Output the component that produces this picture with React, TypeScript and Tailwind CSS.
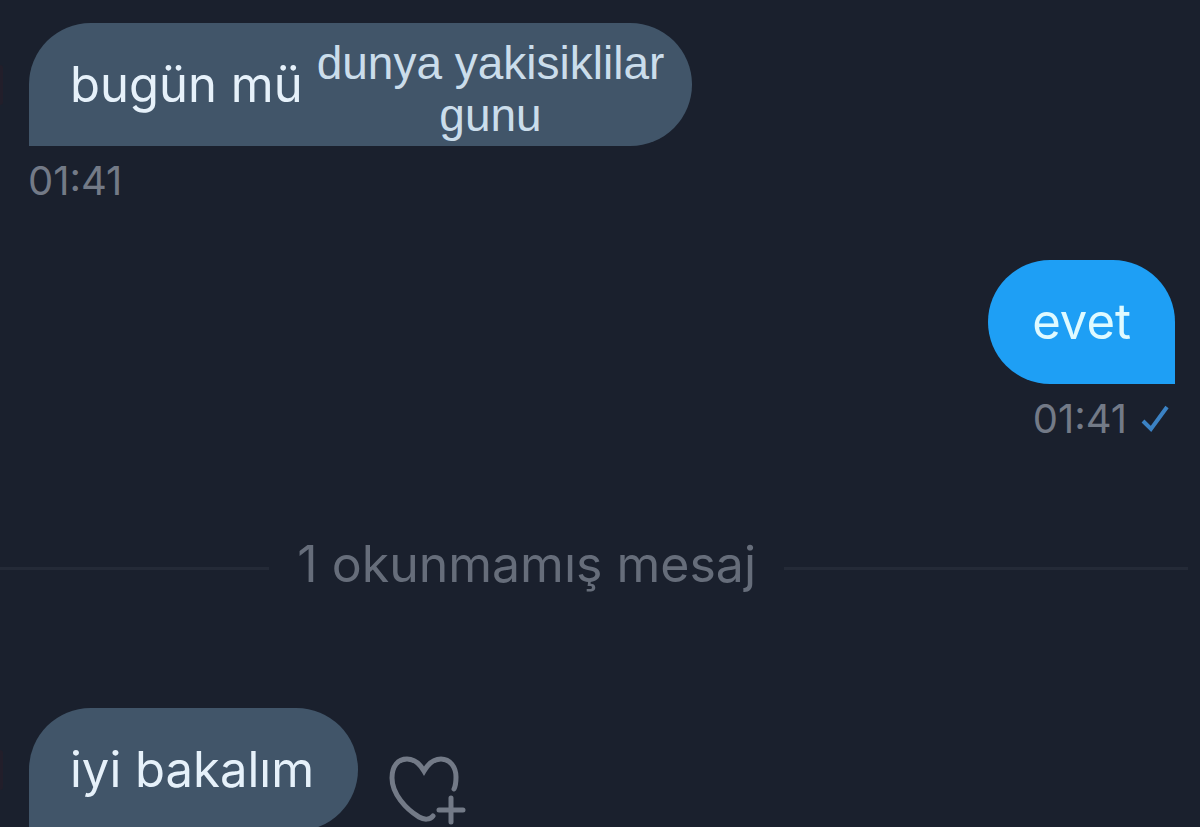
import type { ReactNode } from "react";

const HeartPlus = () => (
  <svg viewBox="0 0 80 76" className="w-20 h-[76px]" fill="none" stroke="currentColor" strokeWidth="5" strokeLinecap="round">
    <path d="M45 61C42 65 36 65 31 62C18 54 4 39 4 23C4 11 10 4 19 4C27 4 32 9 36 16C40 9 45 4 53 4C62 4 68 12 68 22C68 27 68 30 66 34" />
    <path d="M51 55H75M63 43V67" />
  </svg>
);

const Check = () => (
  <svg viewBox="0 0 28 28" className="w-7 h-7 text-[#3b82c4]" fill="none" stroke="currentColor" strokeWidth="4">
    <path d="M2 16L10 24L26 2" />
  </svg>
);

const IncomingMessage = ({ children, action }: { children: ReactNode; action?: ReactNode }) => (
  <div className="flex items-center">
    {/* Edge of the sender's avatar */}
    <div className="w-[3px] h-10 mr-[26px] rounded-r-full bg-[#221e2a]"></div>
    <div className="flex items-center h-[123px] pl-[41px] pr-7 rounded-[62px] rounded-bl-none bg-[#415569] text-[#e6f1fa]">
      {children}
    </div>
    {action}
  </div>
);

const App = () => {
  return (
    <main
      lang="tr"
      className="h-screen overflow-hidden bg-[#1a202d] pt-[23px] font-['Inter','Liberation_Sans',sans-serif] text-[49px] text-[#737a87]"
    >
      <IncomingMessage>
        <p>bugün mü</p>
        <p className="mt-2 ml-3.5 text-center font-['Liberation_Sans',Arial,sans-serif] text-[46px] leading-[52px] text-[#cbddeb]">
          dunya yakisiklilar
          <br />
          gunu
        </p>
      </IncomingMessage>
      <time className="block mt-3 ml-7 text-[40px] leading-[46px]">01:41</time>

      <div className="flex flex-col items-end mt-14 pr-[25px]">
        <div className="flex items-center h-[124px] px-11 rounded-[62px] rounded-br-none bg-[#1e9ff5] text-[#dffaff]">
          <p>evet</p>
        </div>
        <div className="flex items-center gap-3.5 mt-3 pr-1.5">
          <time className="text-[40px] leading-[46px]">01:41</time>
          <Check />
        </div>
      </div>

      <div className="flex items-center gap-7 mt-24 pr-3 text-[#666d7a]">
        <div className="flex-[2] h-[3px] bg-[#242a37]"></div>
        <p className="pb-2 text-[50px] leading-[52px]">1 okunmamış mesaj</p>
        <div className="flex-[3] h-[3px] bg-[#242a37]"></div>
      </div>

      <div className="mt-[110px]">
        <IncomingMessage
          action={
            <button type="button" aria-label="Tepki ekle" className="self-end ml-[30px]">
              <HeartPlus />
            </button>
          }
        >
          <p className="pr-4">iyi bakalım</p>
        </IncomingMessage>
      </div>
    </main>
  );
};

export default App;
